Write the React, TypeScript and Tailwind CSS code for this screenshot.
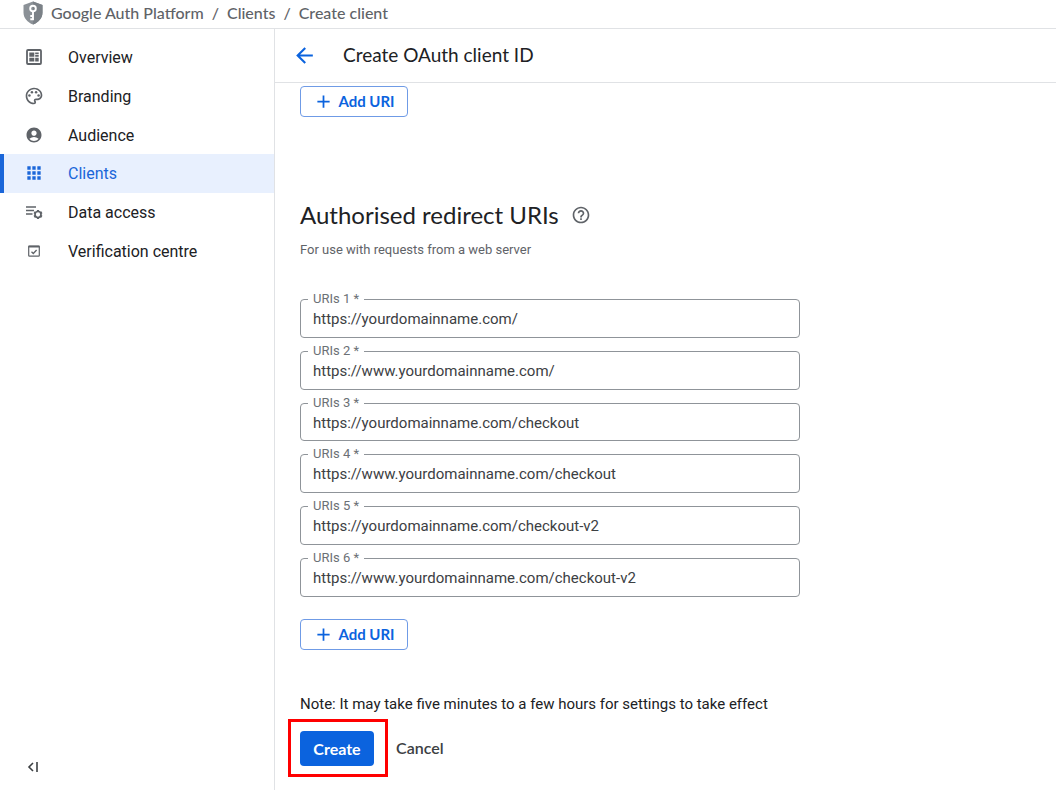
import { useState } from 'react';
import {
  MdAccountCircle,
  MdAdd,
  MdApps,
  MdArrowBack,
  MdHelpOutline,
  MdOutlinePalette,
} from 'react-icons/md';
import clsx from 'clsx';

const initialUris = [
  'https://yourdomainname.com/',
  'https://www.yourdomainname.com/',
  'https://yourdomainname.com/checkout',
  'https://www.yourdomainname.com/checkout',
  'https://yourdomainname.com/checkout-v2',
  'https://www.yourdomainname.com/checkout-v2',
];

const ShieldKeyIcon = () => (
  <svg viewBox="0 0 20 24" className="h-6 w-5" aria-hidden="true">
    <path d="M10 .5 19.5 4v7.5c0 5.500-4 10-9.500 12-5.500-2-9.500-6.500-9.500-12V4z" fill="#8b9197" />
    <path d="M10 .5 19.500 4v7.500c0 5.500-4 10-9.500 12z" fill="#7b8187" />
    <circle cx="10" cy="7.500" r="2.800" fill="none" stroke="#fff" strokeWidth="1.900" />
    <path d="M10 10.200v9M10 15H7.300M10 18.300H7.300" fill="none" stroke="#fff" strokeWidth="1.900" />
  </svg>
);

const OverviewIcon = () => (
  <svg viewBox="0 0 18 18" className="size-[18px]" aria-hidden="true">
    <rect x="2" y="2" width="14" height="14" rx="1" fill="none" stroke="currentColor" strokeWidth="1.800" />
    <path d="M4.300 4.500h5v4.300h-5zM10.200 4.500h3.500v1.700h-3.500zM10.200 7.100h3.500v1.700h-3.500zM10.200 9.700h3.500v3.800h-3.500zM4.300 9.700h5v3.800h-5z" fill="currentColor" />
  </svg>
);

const DataAccessIcon = () => (
  <svg viewBox="0 0 18 18" className="size-[18px]" aria-hidden="true">
    <path d="M1 4h10M1 7.500h8M1 11h6.500" fill="none" stroke="currentColor" strokeWidth="1.600" />
    <circle cx="13" cy="11.500" r="3" fill="none" stroke="currentColor" strokeWidth="1.700" />
    <path
      d="M13 7v1.500M13 14.500v1.500M9.100 9.200l1.300.800M15.600 13l1.300.800M9.100 13.800l1.300-.800M15.600 10l1.300-.800"
      fill="none"
      stroke="currentColor"
      strokeWidth="2.200"
    />
  </svg>
);

const VerificationIcon = () => (
  <svg viewBox="0 0 18 18" className="size-[18px]" aria-hidden="true">
    <rect x="3.700" y="4" width="10.600" height="10.200" rx=".8" fill="none" stroke="currentColor" strokeWidth="1.200" />
    <path d="M3.500 4.600h11" stroke="currentColor" strokeWidth="1.800" />
    <path d="m6.500 9.700 1.800 1.800 3.300-3.500" fill="none" stroke="currentColor" strokeWidth="1.300" />
  </svg>
);

const navItems = [
  { label: 'Overview', icon: <OverviewIcon /> },
  { label: 'Branding', icon: <MdOutlinePalette size={20} /> },
  { label: 'Audience', icon: <MdAccountCircle size={18} /> },
  { label: 'Clients', icon: <MdApps size={20} />, active: true },
  { label: 'Data access', icon: <DataAccessIcon /> },
  { label: 'Verification centre', icon: <VerificationIcon /> },
];

interface UriFieldProps {
  index: number;
  value: string;
  onChange: (value: string) => void;
}

const UriField = ({ index, value, onChange }: UriFieldProps) => {
  const id = `uri-${index}`;

  return (
    <div className="relative">
      <label
        htmlFor={id}
        className="absolute -top-2 left-2 bg-white px-[5px] text-[13px] leading-4 text-[#6b7075]"
      >
        URIs {index} *
      </label>
      <input
        id={id}
        type="text"
        value={value}
        onChange={(e) => onChange(e.target.value)}
        className="h-full w-full rounded border border-[#8f9499] bg-white px-3 pt-px text-[15px] text-[#3c4043] outline-none focus:border-[#0b63de]"
      />
    </div>
  );
};

const AddUriButton = ({ onClick }: { onClick?: () => void }) => (
  <button
    type="button"
    onClick={onClick}
    className="flex h-[31px] w-[108px] items-center justify-center gap-1 rounded border border-[#6f9be6] font-[Lato,sans-serif] text-[15px] font-bold text-[#0b63de] hover:bg-blue-50"
  >
    <MdAdd size={21} />
    Add URI
  </button>
);

const App = () => {
  const [uris, setUris] = useState(initialUris);

  const updateUri = (index: number, value: string) => {
    setUris((current) => current.map((uri, i) => (i === index ? value : uri)));
  };

  return (
    <div className="flex min-h-screen flex-col bg-white font-[Roboto,sans-serif] text-[#202124]">
      <header className="flex h-[29px] items-center border-b border-[#e0e2e5] pb-0.5 pl-[23px]">
        <ShieldKeyIcon />
        <nav
          aria-label="Breadcrumb"
          className="ml-2 flex gap-2 font-[Lato,sans-serif] text-base leading-5 font-medium text-[#5f6368]"
        >
          <a href="#platform">Google Auth Platform</a>
          <span>/</span>
          <a href="#clients">Clients</a>
          <span>/</span>
          <a href="#create">Create client</a>
        </nav>
      </header>

      <div className="flex flex-1">
        <aside className="flex w-[275px] shrink-0 flex-col justify-between border-r border-[#e0e2e5] pt-[9px] pb-3">
          <nav className="grid h-[232px] grid-rows-6">
            {navItems.map((item) => (
              <a
                key={item.label}
                href="#nav"
                className={clsx(
                  'flex items-center border-l-4 text-base',
                  item.active
                    ? 'border-[#1a66d9] bg-[#e8f0fe] text-[#1a66d9]'
                    : 'border-transparent hover:bg-gray-50'
                )}
              >
                <span
                  className={clsx(
                    'ml-5 flex w-5 justify-center',
                    !item.active && 'text-[#5f6368]'
                  )}
                >
                  {item.icon}
                </span>
                <span className="ml-6 pt-0.5">{item.label}</span>
              </a>
            ))}
          </nav>
          <button type="button" aria-label="Collapse menu" className="ml-6 flex size-[22px] items-center">
            <svg viewBox="0 0 22 22" className="size-[22px] text-[#3c4043]" fill="none" stroke="currentColor" strokeWidth="1.600">
              <path d="m9 7-4 4 4 4M13 6v10" />
            </svg>
          </button>
        </aside>

        <main className="min-w-0 flex-1">
          <div className="flex h-[54px] items-center border-b border-[#e0e2e5] pl-[17px]">
            <button type="button" aria-label="Back" className="text-[#0b63de]">
              <MdArrowBack size={25} />
            </button>
            <h1 className="ml-[26px] font-[Lato,sans-serif] text-[19px]">
              Create OAuth client ID
            </h1>
          </div>

          <form className="px-[25px] pt-[3px]" onSubmit={(e) => e.preventDefault()}>
            <AddUriButton />

            <div className="mt-[82px] flex items-center gap-3">
              <h2 className="font-[Lato,sans-serif] text-2xl">Authorised redirect URIs</h2>
              <MdHelpOutline size={20} className="text-[#5f6368]" />
            </div>
            <p className="mt-[9px] text-[13px] leading-5 text-[#5f6368]">
              For use with requests from a web server
            </p>

            <div className="mt-[39px] grid h-[298px] max-w-[500px] grid-rows-6 gap-[13px]">
              {uris.map((uri, i) => (
                <UriField
                  key={i}
                  index={i + 1}
                  value={uri}
                  onChange={(value) => updateUri(i, value)}
                />
              ))}
            </div>

            <div className="mt-[22px]">
              <AddUriButton />
            </div>

            <p className="mt-[42px] text-[15px] leading-6">
              Note: It may take five minutes to a few hours for settings to take effect
            </p>

            <div className="mt-[3px] -ml-3 flex items-center gap-2">
              <div className="border-[3px] border-[#ff0000] pt-[9px] pr-[11px] pb-2 pl-[9px]">
                <button
                  type="submit"
                  className="block h-[35px] w-[74px] rounded bg-[#0b63de] font-[Lato,sans-serif] text-base font-bold text-white"
                >
                  Create
                </button>
              </div>
              <button type="button" className="font-[Lato,sans-serif] text-base font-semibold text-[#3c4043]">
                Cancel
              </button>
            </div>
          </form>
        </main>
      </div>
    </div>
  );
};

export default App;
